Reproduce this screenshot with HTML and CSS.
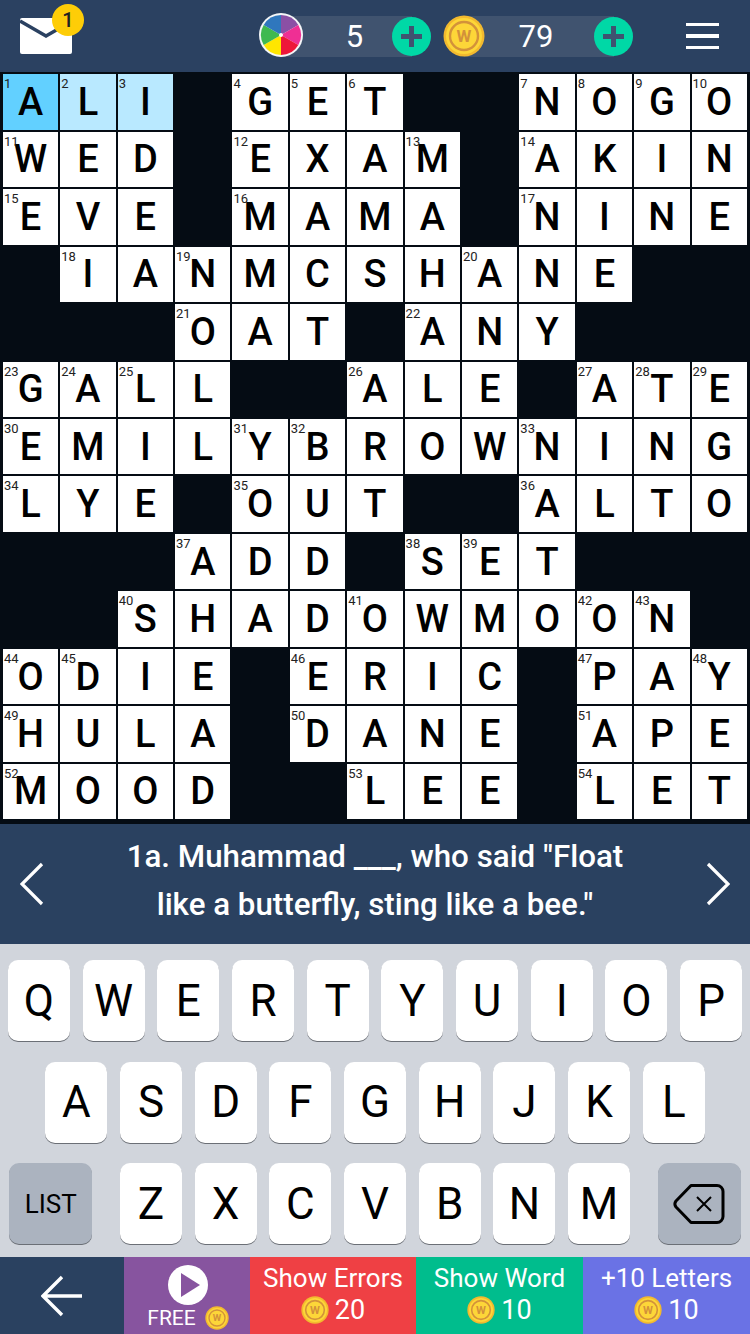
FILE: index.html
```html
<!DOCTYPE html>
<html lang="en">
<head>
    <meta charset="UTF-8">
    <meta name="viewport" content="width=device-width, initial-scale=1.0">
    <title>Crossword</title>
    <link rel="stylesheet" href="styles.css">
</head>
<body>
    <svg class="defs" width="0" height="0">
        <symbol id="coin" viewBox="0 0 42 42">
            <circle cx="21" cy="21" r="20.5" fill="#f2b92f"/>
            <circle cx="21" cy="21" r="18" fill="#fdd638"/>
            <circle cx="21" cy="21" r="14" fill="none" stroke="#d3923a" stroke-width="2.4"/>
            <text x="21" y="27" text-anchor="middle" class="coin-w">W</text>
        </symbol>
        <symbol id="plus" viewBox="0 0 39 39">
            <circle cx="19.5" cy="19.5" r="19.5" fill="#00d8a6"/>
            <path d="M19.5 9v21M9 19.5h21" stroke="#3f5370" stroke-width="5"/>
        </symbol>
    </svg>

    <header class="topbar">
        <div class="mail">
            <svg width="52" height="36" viewBox="0 0 52 36">
                <path d="M2 0h48a2 2 0 0 1 2 2v32a2 2 0 0 1-2 2H2a2 2 0 0 1-2-2V2a2 2 0 0 1 2-2z" fill="#fff"/>
                <path d="M0 3l26 15L52 3" fill="none" stroke="#2b4161" stroke-width="3.5"/>
            </svg>
            <span class="badge">1</span>
        </div>
        <div class="stat stat-lives">
            <svg class="stat-icon wheel" width="44" height="44" viewBox="-22 -22 44 44">
                <circle r="22" fill="#f4f6f7"/>
                <path d="M0 0V-20A20 20 0 0 1 17.3-10z" fill="#8a50a5"/>
                <path d="M0 0L17.3-10A20 20 0 0 1 17.3 10z" fill="#ef2f94"/>
                <path d="M0 0L17.3 10A20 20 0 0 1 0 20z" fill="#ee1739"/>
                <path d="M0 0V20A20 20 0 0 1-17.3 10z" fill="#ffe600"/>
                <path d="M0 0L-17.3 10A20 20 0 0 1-17.3-10z" fill="#3fb950"/>
                <path d="M0 0L-17.3-10A20 20 0 0 1 0-20z" fill="#2f77bd"/>
                <circle r="2" fill="#fff"/>
            </svg>
            <span class="count">5</span>
            <svg class="plus" width="39" height="39"><use href="#plus"/></svg>
        </div>
        <div class="stat stat-coins">
            <svg class="stat-icon" width="42" height="42"><use href="#coin"/></svg>
            <span class="count">79</span>
            <svg class="plus" width="39" height="39"><use href="#plus"/></svg>
        </div>
        <div class="menu"><span></span><span></span><span></span></div>
    </header>

    <main class="board">
        <div class="cell active"><span class="num">1</span>A</div><div class="cell word"><span class="num">2</span>L</div><div class="cell word"><span class="num">3</span>I</div><div class="block"></div><div class="cell"><span class="num">4</span>G</div><div class="cell"><span class="num">5</span>E</div><div class="cell"><span class="num">6</span>T</div><div class="block"></div><div class="block"></div><div class="cell"><span class="num">7</span>N</div><div class="cell"><span class="num">8</span>O</div><div class="cell"><span class="num">9</span>G</div><div class="cell"><span class="num">10</span>O</div>

        <div class="cell"><span class="num">11</span>W</div><div class="cell">E</div><div class="cell">D</div><div class="block"></div><div class="cell"><span class="num">12</span>E</div><div class="cell">X</div><div class="cell">A</div><div class="cell"><span class="num">13</span>M</div><div class="block"></div><div class="cell"><span class="num">14</span>A</div><div class="cell">K</div><div class="cell">I</div><div class="cell">N</div>

        <div class="cell"><span class="num">15</span>E</div><div class="cell">V</div><div class="cell">E</div><div class="block"></div><div class="cell"><span class="num">16</span>M</div><div class="cell">A</div><div class="cell">M</div><div class="cell">A</div><div class="block"></div><div class="cell"><span class="num">17</span>N</div><div class="cell">I</div><div class="cell">N</div><div class="cell">E</div>

        <div class="block"></div><div class="cell"><span class="num">18</span>I</div><div class="cell">A</div><div class="cell"><span class="num">19</span>N</div><div class="cell">M</div><div class="cell">C</div><div class="cell">S</div><div class="cell">H</div><div class="cell"><span class="num">20</span>A</div><div class="cell">N</div><div class="cell">E</div><div class="block"></div><div class="block"></div>

        <div class="block"></div><div class="block"></div><div class="block"></div><div class="cell"><span class="num">21</span>O</div><div class="cell">A</div><div class="cell">T</div><div class="block"></div><div class="cell"><span class="num">22</span>A</div><div class="cell">N</div><div class="cell">Y</div><div class="block"></div><div class="block"></div><div class="block"></div>

        <div class="cell"><span class="num">23</span>G</div><div class="cell"><span class="num">24</span>A</div><div class="cell"><span class="num">25</span>L</div><div class="cell">L</div><div class="block"></div><div class="block"></div><div class="cell"><span class="num">26</span>A</div><div class="cell">L</div><div class="cell">E</div><div class="block"></div><div class="cell"><span class="num">27</span>A</div><div class="cell"><span class="num">28</span>T</div><div class="cell"><span class="num">29</span>E</div>

        <div class="cell"><span class="num">30</span>E</div><div class="cell">M</div><div class="cell">I</div><div class="cell">L</div><div class="cell"><span class="num">31</span>Y</div><div class="cell"><span class="num">32</span>B</div><div class="cell">R</div><div class="cell">O</div><div class="cell">W</div><div class="cell"><span class="num">33</span>N</div><div class="cell">I</div><div class="cell">N</div><div class="cell">G</div>

        <div class="cell"><span class="num">34</span>L</div><div class="cell">Y</div><div class="cell">E</div><div class="block"></div><div class="cell"><span class="num">35</span>O</div><div class="cell">U</div><div class="cell">T</div><div class="block"></div><div class="block"></div><div class="cell"><span class="num">36</span>A</div><div class="cell">L</div><div class="cell">T</div><div class="cell">O</div>

        <div class="block"></div><div class="block"></div><div class="block"></div><div class="cell"><span class="num">37</span>A</div><div class="cell">D</div><div class="cell">D</div><div class="block"></div><div class="cell"><span class="num">38</span>S</div><div class="cell"><span class="num">39</span>E</div><div class="cell">T</div><div class="block"></div><div class="block"></div><div class="block"></div>

        <div class="block"></div><div class="block"></div><div class="cell"><span class="num">40</span>S</div><div class="cell">H</div><div class="cell">A</div><div class="cell">D</div><div class="cell"><span class="num">41</span>O</div><div class="cell">W</div><div class="cell">M</div><div class="cell">O</div><div class="cell"><span class="num">42</span>O</div><div class="cell"><span class="num">43</span>N</div><div class="block"></div>

        <div class="cell"><span class="num">44</span>O</div><div class="cell"><span class="num">45</span>D</div><div class="cell">I</div><div class="cell">E</div><div class="block"></div><div class="cell"><span class="num">46</span>E</div><div class="cell">R</div><div class="cell">I</div><div class="cell">C</div><div class="block"></div><div class="cell"><span class="num">47</span>P</div><div class="cell">A</div><div class="cell"><span class="num">48</span>Y</div>

        <div class="cell"><span class="num">49</span>H</div><div class="cell">U</div><div class="cell">L</div><div class="cell">A</div><div class="block"></div><div class="cell"><span class="num">50</span>D</div><div class="cell">A</div><div class="cell">N</div><div class="cell">E</div><div class="block"></div><div class="cell"><span class="num">51</span>A</div><div class="cell">P</div><div class="cell">E</div>

        <div class="cell"><span class="num">52</span>M</div><div class="cell">O</div><div class="cell">O</div><div class="cell">D</div><div class="block"></div><div class="block"></div><div class="cell"><span class="num">53</span>L</div><div class="cell">E</div><div class="cell">E</div><div class="block"></div><div class="cell"><span class="num">54</span>L</div><div class="cell">E</div><div class="cell">T</div>
    </main>

    <section class="clue">
        <svg width="24" height="44" viewBox="0 0 24 44"><path d="M22 2L2 22l20 20" fill="none" stroke="#fff" stroke-width="3.2"/></svg>
        <p class="clue-text">1a. Muhammad ___, who said "Float<br>like a butterfly, sting like a bee."</p>
        <svg width="24" height="44" viewBox="0 0 24 44"><path d="M2 2l20 20L2 42" fill="none" stroke="#fff" stroke-width="3.2"/></svg>
    </section>

    <section class="keyboard">
        <div class="key-row">
            <div class="key">Q</div><div class="key">W</div><div class="key">E</div><div class="key">R</div><div class="key">T</div><div class="key">Y</div><div class="key">U</div><div class="key">I</div><div class="key">O</div><div class="key">P</div>
        </div>
        <div class="key-row">
            <div class="key">A</div><div class="key">S</div><div class="key">D</div><div class="key">F</div><div class="key">G</div><div class="key">H</div><div class="key">J</div><div class="key">K</div><div class="key">L</div>
        </div>
        <div class="key-row key-row-last">
            <div class="key key-fn key-list">LIST</div>
            <div class="key">Z</div><div class="key">X</div><div class="key">C</div><div class="key">V</div><div class="key">B</div><div class="key">N</div><div class="key">M</div>
            <div class="key key-fn">
                <svg width="52" height="40" viewBox="0 0 52 40">
                    <path d="M18 1.5h26a6 6 0 0 1 6 6v25a6 6 0 0 1-6 6H18L3 23a5 5 0 0 1 0-6z" fill="none" stroke="#000" stroke-width="3" stroke-linejoin="round"/>
                    <path d="M24 13l14 14M38 13L24 27" stroke="#000" stroke-width="2"/>
                </svg>
            </div>
        </div>
    </section>

    <footer class="actions">
        <div class="action action-back">
            <svg width="42" height="42" viewBox="0 0 42 42"><path d="M21 2L2 21l19 19M2 21h39" fill="none" stroke="#fff" stroke-width="3.4"/></svg>
        </div>
        <div class="action action-free">
            <svg width="40" height="40" viewBox="0 0 40 40">
                <circle cx="20" cy="20" r="20" fill="#fff"/>
                <path d="M13 8l19 12-19 12z" fill="#87549f"/>
            </svg>
            <div class="free-label">FREE <svg width="24" height="24"><use href="#coin"/></svg></div>
        </div>
        <div class="action action-errors">
            <span>Show Errors</span>
            <div class="price"><svg width="28" height="28"><use href="#coin"/></svg>20</div>
        </div>
        <div class="action action-word">
            <span>Show Word</span>
            <div class="price"><svg width="28" height="28"><use href="#coin"/></svg>10</div>
        </div>
        <div class="action action-letters">
            <span>+10 Letters</span>
            <div class="price"><svg width="28" height="28"><use href="#coin"/></svg>10</div>
        </div>
    </footer>
</body>
</html>
```

FILE: styles.css
```css
body {
    font-family: Roboto, "Liberation Sans", sans-serif;
    margin: 0;
    padding: 0;
    width: 750px;
    height: 1334px;
    display: flex;
    flex-direction: column;
    overflow: hidden;
    background-color: #050c14;
}

.defs {
    display: none;
}

.coin-w {
    font-family: Roboto, sans-serif;
    font-size: 17px;
    font-weight: 700;
    fill: #d3923a;
}

/* top bar */
.topbar {
    height: 72px;
    flex: none;
    display: flex;
    align-items: center;
    background-color: #2b4161;
    box-sizing: border-box;
}

.mail {
    position: relative;
    width: 52px;
    height: 36px;
    margin-left: 20px;
    margin-top: -1px;
}

.badge {
    position: absolute;
    top: -14px;
    left: 32px;
    width: 32px;
    height: 32px;
    border-radius: 50%;
    background-color: #fecd07;
    color: #222;
    font-size: 20px;
    font-weight: 500;
    line-height: 32px;
    text-align: center;
}

.stat {
    display: flex;
    align-items: center;
}

.stat-lives {
    margin-left: 187px;
    width: 172px;
}

.stat-coins {
    margin-left: 12px;
    width: 190px;
}

.stat-icon,
.plus {
    position: relative;
    flex: none;
}

.wheel {
    margin-top: -2px;
}

.count {
    flex: 1;
    height: 41px;
    background-color: #40536f;
    color: #fff;
    font-size: 31px;
    line-height: 41px;
    text-align: center;
}

.stat-lives .count {
    margin: 0 -20px 0 -22px;
    padding-left: 16px;
}

.stat-coins .count {
    margin: 0 -20px 0 -21px;
    padding-right: 6px;
}

.menu {
    margin-left: 53px;
    width: 33px;
    display: flex;
    flex-direction: column;
    gap: 8px;
}

.menu span {
    height: 3.5px;
    background-color: #fff;
}

/* crossword grid */
.board {
    height: 752px;
    flex: none;
    box-sizing: border-box;
    padding: 2.2px 3.1px 4.8px 2.9px;
    display: grid;
    grid-template-columns: repeat(13, 1fr);
    grid-template-rows: repeat(13, 1fr);
    gap: 2px;
    background-color: #050c14;
}

.cell {
    position: relative;
    background-color: #fff;
    color: #000;
    font-size: 38px;
    font-weight: 500;
    display: flex;
    align-items: center;
    justify-content: center;
}

.cell.active {
    background-color: #62d0ff;
}

.cell.word {
    background-color: #b9e9ff;
}

.num {
    position: absolute;
    top: 3px;
    left: 1px;
    font-size: 13px;
    font-weight: 400;
    line-height: 14px;
    color: #222;
}

/* clue */
.clue {
    height: 120px;
    flex: none;
    box-sizing: border-box;
    padding: 0 20px 6px;
    display: flex;
    align-items: center;
    background-color: #2a4160;
}

.clue svg {
    margin-top: 6px;
}

.clue-text {
    flex: 1;
    margin: 0;
    color: #fff;
    font-size: 31.3px;
    font-weight: 500;
    line-height: 48px;
    text-align: center;
}

/* keyboard */
.keyboard {
    height: 313px;
    flex: none;
    box-sizing: border-box;
    padding-top: 16px;
    display: flex;
    flex-direction: column;
    gap: 20.5px;
    background-color: #d1d5dc;
}

.key-row {
    display: flex;
    justify-content: center;
    gap: 12.7px;
}

.key {
    width: 62px;
    height: 81px;
    box-sizing: border-box;
    border-radius: 10px;
    background-color: #fff;
    box-shadow: 0 1px 0 #6b6f76;
    color: #000;
    font-size: 44px;
    display: flex;
    align-items: center;
    justify-content: center;
}

.key-fn {
    width: 83px;
    background-color: #abb3bf;
}

.key-list {
    font-size: 26px;
    margin-right: 15px;
}

.key-fn:last-child {
    margin-left: 15px;
}

/* bottom actions */
.actions {
    height: 77px;
    flex: none;
    display: flex;
}

.action {
    box-sizing: border-box;
    display: flex;
    flex-direction: column;
    align-items: center;
    color: #fff;
    font-size: 26px;
    line-height: 32px;
    padding-top: 5px;
}

.action-back {
    width: 124px;
    background-color: #2a4160;
    padding-top: 18px;
}

.action-free {
    width: 126px;
    background-color: #87549f;
    padding: 8px 0 0 2px;
}

.free-label {
    display: flex;
    align-items: center;
    gap: 9px;
    font-size: 21px;
    line-height: 26px;
}

.action-errors {
    width: 166px;
    background-color: #ef4044;
}

.action-word {
    width: 167px;
    background-color: #00bd8d;
}

.action-letters {
    width: 167px;
    background-color: #6a72e5;
}

.price {
    display: flex;
    align-items: center;
    gap: 6px;
    font-size: 27px;
}
```
